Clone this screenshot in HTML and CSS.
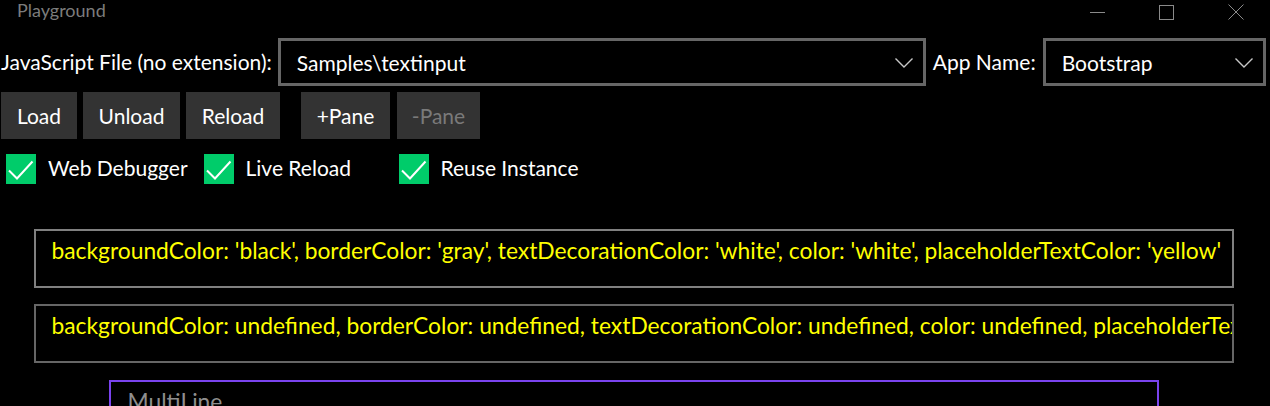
FILE: index.html
```html
<!DOCTYPE html>
<html lang="en">
<head>
<meta charset="utf-8">
<title>Playground</title>
<link rel="stylesheet" href="styles.css">
</head>
<body>
<div class="window">
  <div class="titlebar">
    <div class="title">Playground</div>
    <div class="caption">
      <div class="capbtn">
        <svg width="15" height="15" viewBox="0 0 15 15"><line x1="0" y1="7.5" x2="15" y2="7.5" stroke="#8a8a8a" stroke-width="1"/></svg>
      </div>
      <div class="capbtn">
        <svg width="15" height="15" viewBox="0 0 15 15"><rect x="0.5" y="0.5" width="14" height="14" fill="none" stroke="#8a8a8a" stroke-width="1"/></svg>
      </div>
      <div class="capbtn">
        <svg width="16" height="16" viewBox="0 0 16 16"><path d="M0.5 0.5 L15.5 15.5 M15.5 0.5 L0.5 15.5" stroke="#8a8a8a" stroke-width="1"/></svg>
      </div>
    </div>
  </div>

  <div class="row-file">
    <span class="label label-js">JavaScript File (no extension):</span>
    <div class="combo combo-file">
      <span class="combo-text">Samples\textinput</span>
      <svg class="chevron" width="18" height="10" viewBox="0 0 18 10"><polyline points="0.5,0.5 9,9 17.5,0.5" fill="none" stroke="#c8c8c8" stroke-width="1.4"/></svg>
    </div>
    <span class="label label-app">App Name:</span>
    <div class="combo combo-app">
      <span class="combo-text">Bootstrap</span>
      <svg class="chevron" width="18" height="10" viewBox="0 0 18 10"><polyline points="0.5,0.5 9,9 17.5,0.5" fill="none" stroke="#c8c8c8" stroke-width="1.4"/></svg>
    </div>
  </div>

  <div class="row-buttons">
    <div class="btn btn-load">Load</div>
    <div class="btn btn-unload">Unload</div>
    <div class="btn btn-reload">Reload</div>
    <div class="btn btn-addpane">+Pane</div>
    <div class="btn btn-rmpane disabled">-Pane</div>
  </div>

  <div class="row-checks">
    <div class="check check-first">
      <span class="box"><svg width="30" height="30" viewBox="0 0 30 30"><polyline points="3,16.5 11,24.5 26.5,7.5" fill="none" stroke="#fff" stroke-width="2"/></svg></span>
      <span class="check-label">Web Debugger</span>
    </div>
    <div class="check">
      <span class="box"><svg width="30" height="30" viewBox="0 0 30 30"><polyline points="3,16.5 11,24.5 26.5,7.5" fill="none" stroke="#fff" stroke-width="2"/></svg></span>
      <span class="check-label">Live Reload</span>
    </div>
    <div class="check">
      <span class="box"><svg width="30" height="30" viewBox="0 0 30 30"><polyline points="3,16.5 11,24.5 26.5,7.5" fill="none" stroke="#fff" stroke-width="2"/></svg></span>
      <span class="check-label">Reuse Instance</span>
    </div>
  </div>

  <div class="pane">
    <div class="textbox tb-gray">backgroundColor: 'black', borderColor: 'gray', textDecorationColor: 'white', color: 'white', placeholderTextColor: 'yellow'</div>
    <div class="textbox tb-default">backgroundColor: undefined, borderColor: undefined, textDecorationColor: undefined, color: undefined, placeholderTextColor: undefined</div>
    <div class="multiline"><span class="placeholder">MultiLine</span></div>
  </div>
</div>
</body>
</html>
```
FILE: styles.css
```css
html, body {
  margin: 0;
  padding: 0;
  background: #000;
  overflow: hidden;
}

body {
  font-family: Lato, "Open Sans", sans-serif;
  color: #fff;
  width: 1270px;
  height: 406px;
}

.titlebar {
  display: flex;
  height: 30px;
}

.title {
  flex: 1;
  padding: 1px 0 0 17px;
  font-size: 18px;
  line-height: 18px;
  color: #7c7c7c;
}

.caption {
  display: flex;
}

.capbtn {
  width: 69px;
  height: 24px;
  display: flex;
  align-items: center;
  justify-content: center;
}

.row-file {
  display: flex;
  align-items: center;
  height: 48px;
  margin-top: 8px;
  font-size: 21px;
}

.label {
  white-space: nowrap;
  margin-top: -1px;
}

.label-js {
  margin-left: 1px;
  margin-right: 6px;
}

.label-app {
  margin-left: 7px;
  margin-right: 7px;
}

.combo {
  box-sizing: border-box;
  height: 48px;
  border: 3px solid #666;
  display: flex;
  align-items: center;
  padding: 0 10px 0 16px;
}

.combo-file {
  width: 648px;
}

.combo-app {
  width: 223px;
}

.combo-text {
  flex: 1;
  white-space: nowrap;
}

.chevron {
  display: block;
  margin-top: 1px;
}

.row-buttons {
  display: flex;
  margin-top: 6px;
  padding-left: 1px;
  font-size: 21px;
}

.btn {
  height: 47px;
  background: #333;
  display: flex;
  align-items: center;
  justify-content: center;
  margin-right: 6px;
}

.btn-load { width: 76px; }
.btn-unload { width: 97px; }
.btn-reload { width: 94px; margin-right: 21px; }
.btn-addpane { width: 89px; margin-right: 7px; }
.btn-rmpane { width: 83px; }

.btn.disabled {
  color: #7a7a7a;
}

.row-checks {
  display: flex;
  margin-top: 15px;
  padding-left: 6px;
  height: 30px;
  font-size: 21px;
}

.check {
  display: flex;
  align-items: center;
  min-width: 180px;
  margin-right: 15px;
}

.check-first {
  margin-right: 16px;
}

.box {
  width: 30px;
  height: 30px;
  background: #00cc6a;
  display: block;
}

.box svg {
  display: block;
}

.check-label {
  margin-left: 12px;
  margin-top: -3px;
  white-space: nowrap;
}

.pane {
  margin: 45px 0 0 34px;
  width: 1200px;
}

.textbox {
  box-sizing: border-box;
  height: 59px;
  border: 2px solid #666;
  padding: 5px 0 0 15.5px;
  font-size: 22.8px;
  line-height: 28px;
  color: #ffff00;
  white-space: nowrap;
  overflow: hidden;
}

.tb-gray {
  border-color: #808080;
}

.tb-default {
  margin-top: 16px;
}

.multiline {
  box-sizing: border-box;
  width: 1050px;
  height: 80px;
  margin: 17px auto 0;
  border: 2px solid #7a43ee;
  padding: 5px 0 0 16.5px;
  font-size: 22.8px;
  line-height: 28px;
}

.placeholder {
  color: #8e8e8e;
}
```
